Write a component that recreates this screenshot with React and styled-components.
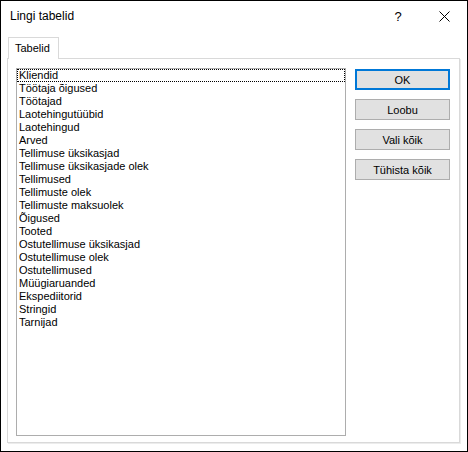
import React, { useState } from "react";
import styled, { createGlobalStyle } from "styled-components";

const GlobalStyle = createGlobalStyle`
  html, body {
    margin: 0;
    padding: 0;
    background: #fff;
  }
  * {
    box-sizing: border-box;
  }
`;

const Window = styled.div`
  width: 468px;
  height: 452px;
  border: 1px solid #000;
  background: #fff;
  display: flex;
  flex-direction: column;
  font-family: "Liberation Sans", Arial, sans-serif;
  color: #000;
`;

const TitleBar = styled.div`
  height: 30px;
  display: flex;
  align-items: center;
  padding-left: 9px;
`;

const Title = styled.div`
  flex: 1;
  font-size: 12px;
  padding-bottom: 1px;
`;

const TitleButton = styled.div`
  width: 46px;
  height: 30px;
  display: flex;
  align-items: center;
  justify-content: center;
  font-size: 13px;
`;

const Body = styled.div`
  flex: 1;
  display: flex;
  flex-direction: column;
  padding: 6px 7px 8px 6px;
`;

const TabStrip = styled.div`
  display: flex;
  padding-left: 1px;
  margin-bottom: -1px;
  position: relative;
  z-index: 1;
`;

const Tab = styled.div`
  width: 51px;
  height: 22px;
  border: 1px solid #d9d9d9;
  border-bottom: none;
  background: #fff;
  font-size: 11px;
  padding: 4px 0 0 6px;
`;

const Panel = styled.div`
  flex: 1;
  display: flex;
  gap: 9px;
  border: 1px solid #d9d9d9;
  box-shadow: 1px 1px 0 #ececec;
  padding: 9px 9px 6px 8px;
`;

const ListBox = styled.div`
  width: 330px;
  border: 1px solid #adadad;
  background: #fff;
  display: flex;
  flex-direction: column;
`;

const Item = styled.div`
  height: 13px;
  line-height: 13px;
  font-size: 11px;
  padding-left: 2px;
  white-space: nowrap;
  outline: ${(p) => (p.$focused ? "1px dotted #000" : "none")};
  outline-offset: -1px;
  margin: ${(p) => (p.$focused ? "0" : "0")};
`;

const ButtonColumn = styled.div`
  display: flex;
  flex-direction: column;
  gap: 9px;
  padding-top: 1px;
`;

const Button = styled.button`
  width: 95px;
  height: 21px;
  padding: 0;
  background: #e1e1e1;
  border: ${(p) => (p.$default ? "2px solid #0078d7" : "1px solid #adadad")};
  font-family: "Liberation Sans", Arial, sans-serif;
  font-size: 11px;
  color: #000;
  cursor: default;
`;

const tables = [
  "Kliendid",
  "Töötaja õigused",
  "Töötajad",
  "Laotehingutüübid",
  "Laotehingud",
  "Arved",
  "Tellimuse üksikasjad",
  "Tellimuse üksikasjade olek",
  "Tellimused",
  "Tellimuste olek",
  "Tellimuste maksuolek",
  "Õigused",
  "Tooted",
  "Ostutellimuse üksikasjad",
  "Ostutellimuse olek",
  "Ostutellimused",
  "Müügiaruanded",
  "Ekspediitorid",
  "Stringid",
  "Tarnijad",
];

const CloseIcon = () => (
  <svg width="11" height="11" viewBox="0 0 11 11">
    <path d="M0.5 0.5 L10.5 10.5 M10.5 0.5 L0.5 10.5" stroke="#000" strokeWidth="1" fill="none" />
  </svg>
);

const App = () => {
  const [focused] = useState(0);
  return (
    <>
      <GlobalStyle />
      <Window>
        <TitleBar>
          <Title>Lingi tabelid</Title>
          <TitleButton>?</TitleButton>
          <TitleButton>
            <CloseIcon />
          </TitleButton>
        </TitleBar>
        <Body>
          <TabStrip>
            <Tab>Tabelid</Tab>
          </TabStrip>
          <Panel>
            <ListBox>
              {tables.map((t, i) => (
                <Item key={t} $focused={i === focused}>
                  {t}
                </Item>
              ))}
            </ListBox>
            <ButtonColumn>
              <Button $default>OK</Button>
              <Button>Loobu</Button>
              <Button>Vali kõik</Button>
              <Button>Tühista kõik</Button>
            </ButtonColumn>
          </Panel>
        </Body>
      </Window>
    </>
  );
};

export default App;
